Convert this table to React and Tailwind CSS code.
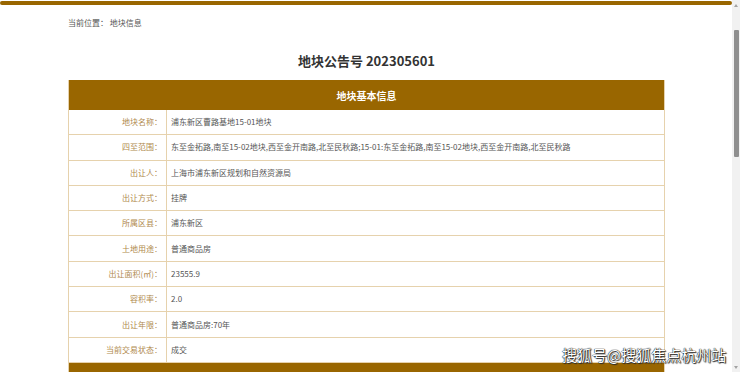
const rows = [
  ['地块名称：', '浦东新区曹路基地15-01地块'],
  ['四至范围：', '东至金拓路,南至15-02地块,西至金开南路,北至民秋路;15-01:东至金拓路,南至15-02地块,西至金开南路,北至民秋路'],
  ['出让人：', '上海市浦东新区规划和自然资源局'],
  ['出让方式：', '挂牌'],
  ['所属区县：', '浦东新区'],
  ['土地用途：', '普通商品房'],
  ['出让面积(㎡)：', '23555.9'],
  ['容积率：', '2.0'],
  ['出让年限：', '普通商品房:70年'],
  ['当前交易状态：', '成交'],
];

function Scrollbar() {
  return (
    <div className="flex w-[8px] flex-col items-center bg-[#f1f1f1]">
      <div className="mt-[4px] h-0 w-0 border-x-[2px] border-b-[3px] border-x-transparent border-b-[#a3a3a3]" />
      <div className="mt-[23px] h-[127px] w-[5px] shrink-0 rounded-[1px] bg-[#8f8f8f]" />
      <div className="flex-1" />
      <div className="mb-[3px] h-0 w-0 border-x-[2px] border-t-[3px] border-x-transparent border-t-[#a3a3a3]" />
    </div>
  );
}

export default function App() {
  return (
    <div
      className="relative flex h-[372px] w-[740px] overflow-hidden bg-white"
      style={{ fontFamily: '"Noto Sans CJK SC", "Noto Sans", sans-serif' }}
    >
      <div className="flex w-[732px] flex-col">
        {/* top strip */}
        <div className="mt-[1px] h-[4px] shrink-0 rounded-[2px] bg-[#996600]" />

        <div className="flex shrink-0 flex-col pl-[68px] pr-[67px]">
          <div className="pt-[13px] text-[8px] leading-[10px] text-[#555]">当前位置：&nbsp;地块信息</div>

          <h1 className="mt-[25px] text-center text-[13px] font-bold leading-[16px] text-[#333]">
            地块公告号 202305601
          </h1>

          {/* table */}
          <div className="mt-[11px] border-x border-[#e6d2ad]">
            <div className="flex h-[30px] items-center justify-center bg-[#996600] text-[10px] font-bold text-white">
              地块基本信息
            </div>
            {rows.map(([label, value]) => (
              <div key={label} className="grid h-[25.3px] grid-cols-[98px_1fr] border-b border-[#e6d2ad]">
                <div className="flex items-center justify-end border-r border-[#e6d2ad] pr-[4px] text-[8px] text-[#b08a4e]">
                  {label}
                </div>
                <div className="flex items-center pl-[4px] text-[8px] text-[#555]">{value}</div>
              </div>
            ))}
            <div className="h-[30px] bg-[#996600]" />
          </div>
        </div>
      </div>

      <Scrollbar />

      {/* watermark */}
      <div className="absolute left-[562px] top-[345px] text-[15px] leading-[20px] text-white [text-shadow:0_0_1px_#000,0_0_1px_#000,1px_1px_1px_#333]">
        搜狐号@搜狐焦点杭州站
      </div>
    </div>
  );
}
